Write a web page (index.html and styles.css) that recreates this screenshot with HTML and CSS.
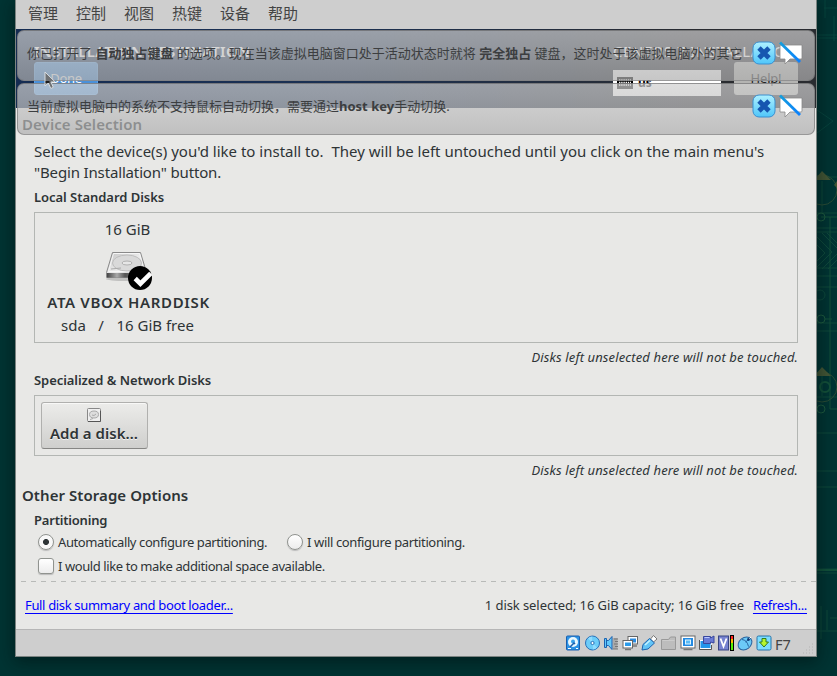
FILE: index.html
```html
<!DOCTYPE html>
<html lang="zh-CN">
<head>
<meta charset="utf-8">
<title>Virtual Machine</title>
<link rel="stylesheet" href="styles.css">
</head>
<body>
<svg class="blueprint" width="20" height="676" viewBox="0 0 20 676" fill="none">
  <path d="M0 35h20M0 38h20M7 8h13M8 0v18M17 16v25M0 110l16 11-16 12" stroke="#0b4a43"/>
  <g stroke="#14503f">
    <path d="M0 177h20M5 181v32M0 213h20M0 228h20M0 232h20M0 268h20M0 276h20M0 287h20M0 323h20M0 331h20M5 374v22M0 397h20M0 433h20M0 471h20M0 487h20"/>
    <path d="M0 237l15 15L0 267M0 245l8 8-8 8M5 233l15 15M10 233l10 10M20 254L5 269M20 260l-9 9"/>
    <circle cx="3" cy="295" r="5"/><path d="M0 569h20M0 573h20M4 606v33M0 631h20M10 610v20M13 618h7"/>
  </g>
  <path d="M13 217v192M4 217h16M13 409h7M8 319h7" stroke="#1a5a3c"/>
  <circle cx="4" cy="217" r="4" stroke="#286744"/><circle cx="4" cy="319" r="4" stroke="#286744"/><circle cx="4" cy="409" r="4" stroke="#286744"/>
  <circle cx="5" cy="190" r="15" stroke="#3a5537"/><circle cx="5" cy="387" r="15" stroke="#3a5537"/>
  <circle cx="8" cy="387" r="5" stroke="#1a5a3c" stroke-width="2"/>
  <path d="M-3 180L5 171l9 9zM-3 376l8-9 9 9z" fill="#5a6136"/>
  <path d="M17 185l3-4v7z" fill="#5a6136"/>
  <path d="M0 570h20" stroke="#175a3d" stroke-width="2"/>
</svg>
<div class="window">
  <nav class="menu"><span>管理</span><span>控制</span><span>视图</span><span>热键</span><span>设备</span><span>帮助</span></nav>
  <header class="installer">
    <div class="installer-left">
      <div class="title">INSTALLATION DESTINATION</div>
      <div class="done">Done</div>
    </div>
    <div class="installer-right">
      <div class="product">CENTOS 7 INSTALLATION</div>
      <div class="tools">
        <div class="layout">
          <svg width="16" height="12" viewBox="0 0 16 12"><rect x=".5" y=".5" width="15" height="11" fill="#000" stroke="#000"/><path d="M2 3h12M2 5.500h12M2 8h12" stroke="#fff" stroke-width="1.300" stroke-dasharray="1.400 .8"/></svg>
          <span>us</span>
        </div>
        <div class="help">Help!</div>
      </div>
    </div>
  </header>
  <main class="content">
    <h1 class="device">Device Selection</h1>
    <p class="intro"><span class="l1">Select the device(s) you'd like to install to.&nbsp; They will be left untouched until you click on the main menu's</span><br><span class="l2">"Begin Installation" button.</span></p>
    <h2 class="local">Local Standard Disks</h2>
    <section class="disks">
      <div class="disk">
        <div class="size">16 GiB</div>
        <svg class="drive" width="50" height="42" viewBox="0 0 50 42">
          <defs>
            <linearGradient id="top" x1="0" y1="0" x2="1" y2="1"><stop offset="0" stop-color="#c4c4c4"/><stop offset=".5" stop-color="#ececec"/><stop offset="1" stop-color="#bdbdbd"/></linearGradient>
            <linearGradient id="side" x1="0" x2="1"><stop offset="0" stop-color="#444"/><stop offset=".25" stop-color="#aaa"/><stop offset=".45" stop-color="#555"/><stop offset="1" stop-color="#999"/></linearGradient>
          </defs>
          <ellipse cx="23" cy="30" rx="20" ry="2" fill="#999" opacity=".5"/>
          <path d="M9.500 3.500h28l6 20v5h-40v-5z" fill="url(#top)" stroke="#8a8a8a"/>
          <path d="M4 24h40v4.500H4z" fill="url(#side)"/>
          <path d="M10.500 4.500h26l5 18H5.500z" stroke="#f6f6f6" fill="none"/>
          <ellipse cx="24" cy="14" rx="14.500" ry="8" fill="#d9d9d9" stroke="#bdbdbd"/>
          <ellipse cx="24" cy="14" rx="5" ry="2" fill="#e6e6e6" stroke="#b0b0b0"/>
          <path d="M8 20l10-1" stroke="#aaa"/>
          <circle cx="37" cy="29" r="12" fill="#000"/>
          <path d="M32.200 29.500l5.200 5.200L47.800 24.300" fill="none" stroke="#fff" stroke-width="4.600"/>
        </svg>
        <div class="name">ATA VBOX HARDDISK</div>
        <div class="info"><span>sda</span><span>/</span><span>16 GiB free</span></div>
      </div>
    </section>
    <p class="note">Disks left unselected here will not be touched.</p>
    <h2 class="special">Specialized &amp; Network Disks</h2>
    <section class="network">
      <div class="add">
        <svg width="14" height="14" viewBox="0 0 14 14"><rect x=".5" y=".5" width="13" height="13" rx="1" fill="#efefef" stroke="#888"/><path d="M1 13.500h12.500V3" stroke="#555" fill="none"/><ellipse cx="7" cy="6.500" rx="4.500" ry="3.500" fill="#ddd" stroke="#aaa"/><path d="M5 7q2 1.500 4-1M3 11.500l3-1" stroke="#aaa" fill="none"/></svg>
        <span>Add a disk…</span>
      </div>
    </section>
    <p class="note">Disks left unselected here will not be touched.</p>
    <h1 class="other">Other Storage Options</h1>
    <h2 class="part">Partitioning</h2>
    <div class="options"><i class="radio on"></i><span class="auto">Automatically configure partitioning.</span><i class="radio"></i><span class="manual">I will configure partitioning.</span></div>
    <div class="options second"><i class="check"></i><span class="space">I would like to make additional space available.</span></div>
    <div class="divider"></div>
    <footer class="summary"><a class="full">Full disk summary and boot loader...</a><span class="count">1 disk selected; 16 GiB capacity; 16 GiB free</span><a class="refresh">Refresh...</a></footer>
  </main>
  <div class="status">
    <svg viewBox="0 0 16 16"><rect x="1.500" y="1" width="13" height="14" rx="1" fill="#2c93e6" stroke="#1a5fae"/><circle cx="8" cy="7" r="5" fill="#e9f8ff"/><circle cx="8" cy="6.500" r="2" fill="#3aa0e8"/><path d="M5 12l4-4 1 1" stroke="#1a5fae" stroke-width="1.500" fill="none"/><path d="M3 13.500h3M11 13.500h2" stroke="#fff"/></svg>
    <svg viewBox="0 0 16 16"><circle cx="8.500" cy="8" r="7" fill="#6cccf8" stroke="#2870b8"/><path d="M8.500 8L4 3.500a6 6 0 0 1 4-2zM8.500 8l4.500 4.500a6 6 0 0 1-4 2z" fill="#8fdcff"/><circle cx="8.500" cy="8" r="1.600" fill="#fff" stroke="#2870b8"/></svg>
    <svg viewBox="0 0 16 16"><path d="M9.500 3h5v11h-5z" fill="#aaa"/><path d="M11 4h4M12 6.500h3M11 9h4M12 11.500h3M10 14h5" stroke="#777"/><path d="M1.500 3.500h2v9h-2zM3.500 5.500h2L9 1.500v13l-3.500-4h-2z" fill="#62c8fa" stroke="#1c63b0"/></svg>
    <svg viewBox="0 0 16 16"><rect x="6" y="1.500" width="9.500" height="7.500" fill="#fff" stroke="#666"/><path d="M8 3.500h6v4H8z" fill="#2a8be0"/><path d="M11 11h4" stroke="#777" stroke-width="1.500"/><rect x="1" y="5.500" width="9.500" height="7.500" fill="#fff" stroke="#666"/><path d="M3 7.500h6v3.500H3z" fill="#2a9bea"/><path d="M3 14.500h6" stroke="#777" stroke-width="1.500"/></svg>
    <svg viewBox="0 0 16 16"><path d="M9.500 4l3-3.500 3.500 3.500-3.500 3z" fill="#fff" stroke="#777"/><path d="M1 15l1-5.500 6.500-6 5 4.500-6.500 6z" fill="#62c4f6" stroke="#1c63b0"/><path d="M4 10l5-4.500" stroke="#c4f2ff" stroke-width="1.500"/></svg>
    <svg viewBox="0 0 16 16"><path d="M1.500 14.500V4.500h7l2-2.500h5v12.500z" fill="#bdbdbd" stroke="#999"/><path d="M2.500 5.500h12" stroke="#ccc"/></svg>
    <svg viewBox="0 0 16 16"><rect x="1" y="1" width="14" height="12" fill="#fff" stroke="#666"/><rect x="3" y="3" width="10" height="8" fill="#238ae2"/><rect x="5.500" y="5" width="5" height="4" fill="#5bbcf7" stroke="#dff6ff"/><path d="M3.500 14.500h9" stroke="#777" stroke-width="1.500"/></svg>
    <svg viewBox="0 0 16 16"><rect x="1" y="5.500" width="11" height="8" fill="#2495eb" stroke="#fff"/><path d="M.5 5v9.500h12V10" fill="none" stroke="#555"/><path d="M4.500 1.500h7v1.500l3.500-2v7l-3.500-1v1.500h-7z" fill="#6a7bd5" stroke="#38479d"/><path d="M5.500 2.500h5" stroke="#bac8ff"/></svg>
    <svg viewBox="0 0 16 16"><rect x=".5" y="1" width="10" height="14" fill="#7682d0" stroke="#364483"/><path d="M2.500 3.500L5.500 11.500l3-8" fill="none" stroke="#fff" stroke-width="1.800"/><path d="M12 0h4v16h-4z" fill="#000"/><path d="M13 1h2v3h-2z" fill="#f22"/><path d="M13 4h2v4h-2z" fill="#fb0"/><path d="M13 8h2v7h-2z" fill="#5e0"/></svg>
    <svg viewBox="0 0 16 16"><ellipse cx="8" cy="8.500" rx="7.500" ry="5.800" transform="rotate(-38 8 8.500)" fill="#6ccaf7" stroke="#27639f"/><path d="M5 4.500q5 .5 6.500 7M8.500 7l2.500-2" stroke="#27639f" fill="none"/><circle cx="11.500" cy="4.500" r="1.400" fill="#103b78"/><path d="M12.500 3.500l1.500-1.500" stroke="#fff"/></svg>
    <svg viewBox="0 0 16 16"><rect x="1" y="1" width="14" height="14" rx="1.500" fill="#7cdcff" stroke="#2673a9"/><path d="M6 3.500h4V7h2.500L8 12 3.500 7H6z" fill="#b7f52e" stroke="#337b22"/></svg>
    <span>F7</span>
    <svg class="grip" viewBox="0 0 12 12"><path d="M10 1h1M7 4h1M10 4h1M4 7h1M7 7h1M10 7h1M1 10h1M4 10h1M7 10h1M10 10h1" stroke="#b4b4b4"/></svg>
  </div>
  <aside class="notice first">
    <div>你已打开了 <b>自动独占键盘</b> 的选项。现在当该虚拟电脑窗口处于活动状态时就将 <b>完全独占</b> 键盘，这时处于该虚拟电脑外的其它</div>
    <svg class="acts" width="52" height="24" viewBox="0 0 52 24"><defs><linearGradient id="aq" x2="0" y2="1"><stop stop-color="#aef0ff"/><stop offset="1" stop-color="#4fc6fa"/></linearGradient><linearGradient id="sl" x2="1" y2="1"><stop stop-color="#169edb"/><stop offset="1" stop-color="#0a80ff"/></linearGradient></defs><rect x="1" y="1" width="22" height="22" rx="6" fill="url(#aq)" stroke="#3a8fd0"/><path d="M7 7l10 10M17 7L7 17" stroke="#1656b0" stroke-width="4.800"/><path d="M28 5q0-1 1-1h21v13q0 1-1 1H38l-5 5v-5h-5z" fill="#fff" stroke="#888" stroke-width=".8"/><path d="M28 1.500l20 19.500" stroke="url(#sl)" stroke-width="2.800"/></svg>
  </aside>
  <aside class="notice second-notice">
    <div>当前虚拟电脑中的系统不支持鼠标自动切换，需要通过<b>host key</b>手动切换.</div>
    <svg class="acts" width="52" height="24" viewBox="0 0 52 24"><rect x="1" y="1" width="22" height="22" rx="6" fill="url(#aq)" stroke="#3a8fd0"/><path d="M7 7l10 10M17 7L7 17" stroke="#1656b0" stroke-width="4.800"/><path d="M28 5q0-1 1-1h21v13q0 1-1 1H38l-5 5v-5h-5z" fill="#fff" stroke="#888" stroke-width=".8"/><path d="M28 1.500l20 19.500" stroke="url(#sl)" stroke-width="2.800"/></svg>
  </aside>
  <svg class="cursor" width="12" height="19" viewBox="0 0 12 19"><path d="M1 1v14l3.300-3 2.500 5.500 2.500-1.200L7 11h4.200z" fill="#6f7275" stroke="#d8dce0"/><path d="M1.500 11h4" stroke="#000" stroke-width="1.500"/></svg>
</div>
</body>
</html>
```
FILE: styles.css
```css
* { box-sizing: border-box; }
body {
  margin: 0;
  height: 676px;
  overflow: hidden;
  background: #003433;
  font: 13px/20px "Noto Sans", "Noto Sans CJK SC", sans-serif;
  color: #2e3436;
}
h1, h2, p { margin: 0; white-space: nowrap; }
h1 { font-size: 15px; line-height: 20px; }
h2 { font-size: 13px; line-height: 20px; }
h1, h2 { font-weight: 600; }
.blueprint { position: absolute; left: 817px; top: 0; opacity: .75; }

.window {
  position: relative;
  width: 800px;
  height: 656px;
  margin-left: 16px;
  display: flex;
  flex-direction: column;
  background: #e8e8e6;
  box-shadow: 0 0 0 1px #7b8381, 0 4px 16px 2px rgba(0, 15, 15, .55);
}
.menu {
  height: 29px;
  display: flex;
  gap: 18px;
  padding-left: 12px;
  background: #cecece;
  font-size: 15px;
  line-height: 27px;
  color: #444;
}
.installer {
  height: 79px;
  display: flex;
  justify-content: space-between;
  padding: 12px 18px 0;
  background: linear-gradient(90deg, #152c52 0%, #1b3052 40%, #292b30 85%);
  color: #fff;
}
.title { font-size: 15px; font-weight: 600; line-height: 20px; letter-spacing: .22px; }
.done {
  width: 64px;
  height: 33px;
  margin-top: 1px;
  border: 1px solid #5aa0e8;
  border-radius: 3px;
  background: #4a90d9;
  line-height: 31px;
  text-align: center;
  letter-spacing: -.3px;
}
.product { font-size: 15px; line-height: 20px; letter-spacing: .42px; }
.tools { display: flex; gap: 13px; margin-top: 1px; }
.layout {
  width: 108px;
  height: 26px;
  margin-top: 8px;
  padding-left: 4px;
  display: flex;
  align-items: center;
  gap: 5px;
  background: #fff;
  color: #000;
  font-weight: 700;
  font-size: 12px;
}
.help {
  width: 64px;
  height: 33px;
  border-radius: 3px;
  background: #b4b4b2;
  color: #222;
  line-height: 32px;
  text-align: center;
  letter-spacing: -.2px;
}
.content { height: 521px; display: flow-root; }
.device { margin: 6px 0 0 6px; letter-spacing: .08px; }
.intro { margin: 7px 0 0 18px; font-size: 15px; line-height: 21px; }
.l2 { letter-spacing: -.15px; }
.local { margin: 4px 0 0 18px; letter-spacing: -.04px; }
.disks, .network { margin-left: 18px; width: 764px; border: 1px solid #b3b6b3; }
.disks { height: 131px; margin-top: 5px; }
.disk { width: 187px; text-align: center; font-size: 15px; }
.size { margin: 6px 2px 0 0; line-height: 20px; }
.drive { display: block; margin: 10px 0 0 68px; }
.name { margin-top: 1px; line-height: 20px; font-weight: 600; letter-spacing: .66px; }
.info { display: flex; gap: 12.5px; margin: 3px 0 0 26px; line-height: 20px; }
.note { margin: 4px 18px 0 0; text-align: right; font-style: italic; letter-spacing: .12px; }
.special { margin: 3px 0 0 18px; letter-spacing: -.06px; }
.network { height: 61px; margin-top: 5px; padding: 6px; }
.add {
  width: 107px;
  height: 47px;
  border: 1px solid #b0b0ae;
  border-bottom-color: #868684;
  border-radius: 3px;
  background: linear-gradient(#ececea, #cfcfcd);
  box-shadow: inset 0 1px #f8f8f7;
  display: flex;
  flex-direction: column;
  align-items: center;
  padding: 5px 1px 0 0;
  font-size: 15px;
  font-weight: 600;
  letter-spacing: .02px;
  line-height: 20px;
}
.add span { margin-top: 1px; text-shadow: 0 1px #f4f4f4; }
.other { margin: 5px 0 0 6px; letter-spacing: .06px; }
.part { margin: 5px 0 0 18px; letter-spacing: -.2px; }
.options { display: flex; align-items: center; height: 20px; margin: 2px 0 0 22px; white-space: nowrap; }
.second { margin-top: 4px; }
.radio, .check {
  width: 16px;
  height: 16px;
  margin-right: 4px;
  border: 1px solid #90938f;
  background: linear-gradient(#fff, #ececec);
  box-shadow: 0 1px 1px #bbb;
}
.radio { border-radius: 50%; }
.check { border-radius: 3px; }
.on { background: radial-gradient(circle, #2e3436 0 2.6px, #f8f8f8 3.4px); }
.auto { width: 229px; letter-spacing: -.4px; }
.manual { letter-spacing: -.36px; }
.space { letter-spacing: -.41px; }
.divider {
  height: 1px;
  margin: 5px 0 0 5px;
  background: repeating-linear-gradient(90deg, #b8bab8 0 5px, transparent 5px 10px);
}
.summary { display: flex; margin: 13px 9px 0; white-space: nowrap; }
.summary a { color: #00f; text-decoration: underline; text-decoration-skip-ink: none; text-underline-offset: 3px; }
.full { letter-spacing: -.34px; margin-right: auto; }
.count { letter-spacing: -.08px; }
.refresh { margin-left: 9px; letter-spacing: -.3px; }

.status {
  height: 27px;
  border-top: 1px solid #b6b6b6;
  background: #cecece;
  display: flex;
  align-items: center;
  gap: 3.1px;
  padding-left: 549px;
  font-size: 14px;
  color: #444;
}
.status svg { width: 16px; height: 16px; overflow: visible; flex: none; }
.status span { margin-top: 1px; font-size: 14.5px; }
.status .grip { width: 12px; height: 12px; margin: 11px 2px 0 auto; }

.notice {
  position: absolute;
  left: 1px;
  width: 798px;
  border: 1px solid rgba(110, 110, 112, .6);
  border-radius: 7px;
  background: linear-gradient(rgba(208, 208, 208, .7), rgba(175, 175, 175, .7));
  display: flex;
  align-items: center;
  padding-left: 9px;
  white-space: nowrap;
  color: #3c3e40;
}
.first { top: 30px; height: 51px; padding-bottom: 6px; }
.second-notice { top: 83px; height: 52px; padding-bottom: 7px; }
.acts { position: absolute; left: 734px; top: 10px; }
.cursor { position: absolute; left: 28px; top: 71px; }
```
